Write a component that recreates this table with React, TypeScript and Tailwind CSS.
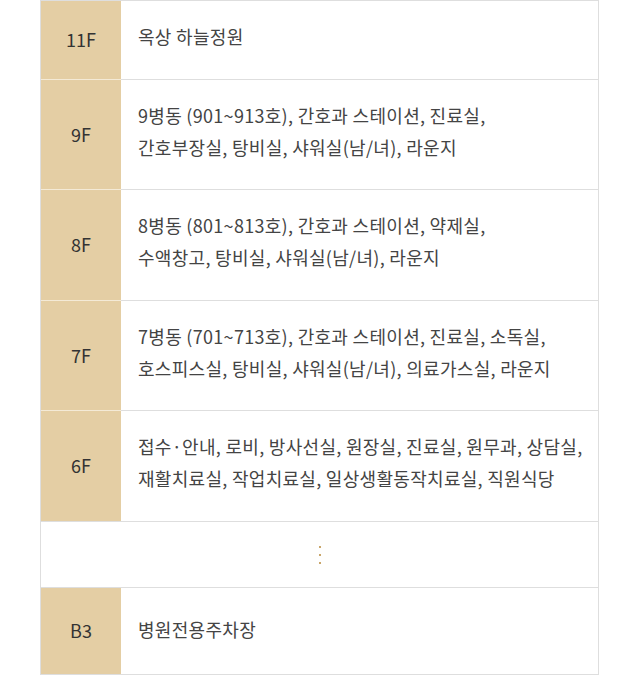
import React from "react";

const rows: { f: string; lines: string[] }[] = [
  { f: "11F", lines: ["옥상 하늘정원"] },
  { f: "9F", lines: ["9병동 (901~913호), 간호과 스테이션, 진료실,", "간호부장실, 탕비실, 샤워실(남/녀), 라운지"] },
  { f: "8F", lines: ["8병동 (801~813호), 간호과 스테이션, 약제실,", "수액창고, 탕비실, 샤워실(남/녀), 라운지"] },
  { f: "7F", lines: ["7병동 (701~713호), 간호과 스테이션, 진료실, 소독실,", "호스피스실, 탕비실, 샤워실(남/녀), 의료가스실, 라운지"] },
  { f: "6F", lines: ["접수·안내, 로비, 방사선실, 원장실, 진료실, 원무과, 상담실,", "재활치료실, 작업치료실, 일상생활동작치료실, 직원식당"] },
];

export default function App() {
  return (
    <div
      className="w-[640px] h-[675px] bg-white overflow-hidden"
      style={{ fontFamily: '"Noto Sans CJK KR", "Noto Sans", sans-serif' }}
    >
      <div className="ml-[40px] w-[559px] border-t border-l border-r border-[#dedede]">
        {rows.map((r, i) => (
          <div key={r.f} className="flex">
            <div
              className={
                "w-[80px] shrink-0 bg-[#e4cea4] flex items-center justify-center text-[18px] text-[#333] border-b " +
                (i === rows.length - 1 ? "border-[#dedede]" : "border-[#f4ead6]")
              }
            >
              {r.f}
            </div>
            <div className="flex-1 border-b border-[#dedede] pl-[17px] pt-[19px] pb-[26.5px] text-[18px] leading-[32px] text-[#444] tracking-[0.3px]">
              {r.lines.map((l) => (
                <div key={l} className="whitespace-nowrap">{l}</div>
              ))}
            </div>
          </div>
        ))}
        <div className="h-[66px] border-b border-[#dedede] flex flex-col items-center justify-center gap-[6px] pt-[2px]">
          <span className="w-[2px] h-[2px] bg-[#c9a66b]" />
          <span className="w-[2px] h-[2px] bg-[#c9a66b]" />
          <span className="w-[2px] h-[2px] bg-[#c9a66b]" />
        </div>
        <div className="flex h-[87px]">
          <div className="w-[80px] shrink-0 bg-[#e4cea4] flex items-center justify-center text-[18px] text-[#333] border-b border-[#dedede]">
            B3
          </div>
          <div className="flex-1 border-b border-[#dedede] pl-[17px] pb-[2px] flex items-center text-[18px] text-[#444] tracking-[0.3px]">
            병원전용주차장
          </div>
        </div>
      </div>
    </div>
  );
}
